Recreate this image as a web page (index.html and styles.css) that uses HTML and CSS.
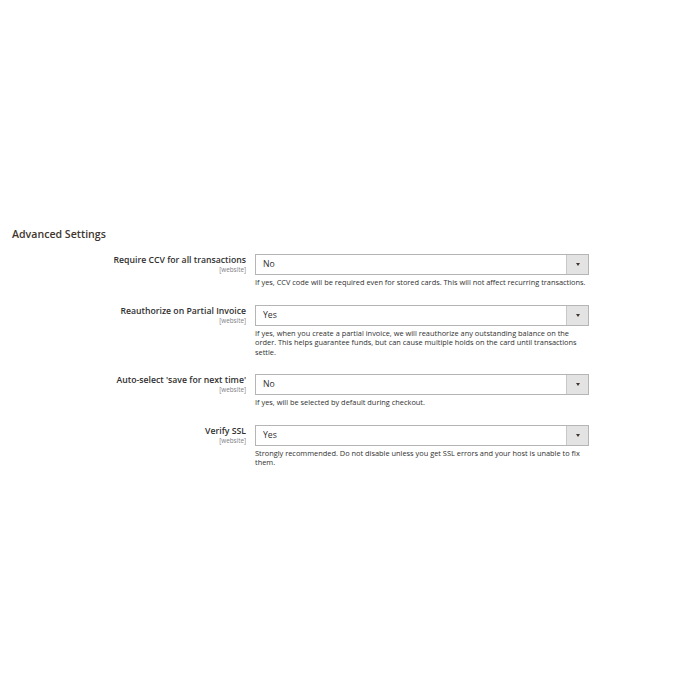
FILE: index.html
```html
<!DOCTYPE html>
<html>
<head>
<meta charset="utf-8">
<link rel="stylesheet" href="styles.css">
</head>
<body>
<div class="page">
  <h2 class="section-title">Advanced Settings</h2>
  <div class="fields">
    <div class="row">
      <div class="label"><span class="label-text">Require CCV for all transactions</span><span class="scope">[website]</span></div>
      <div class="control">
        <div class="select"><span class="value">No</span><span class="arrow"><span class="tri"></span></span></div>
        <p class="note">If yes, CCV code will be required even for stored cards. This will not affect recurring transactions.</p>
      </div>
    </div>
    <div class="row">
      <div class="label"><span class="label-text">Reauthorize on Partial Invoice</span><span class="scope">[website]</span></div>
      <div class="control">
        <div class="select"><span class="value">Yes</span><span class="arrow"><span class="tri"></span></span></div>
        <p class="note">If yes, when you create a partial invoice, we will reauthorize any outstanding balance on the order. This helps guarantee funds, but can cause multiple holds on the card until transactions settle.</p>
      </div>
    </div>
    <div class="row">
      <div class="label"><span class="label-text">Auto-select 'save for next time'</span><span class="scope">[website]</span></div>
      <div class="control">
        <div class="select"><span class="value">No</span><span class="arrow"><span class="tri"></span></span></div>
        <p class="note">If yes, will be selected by default during checkout.</p>
      </div>
    </div>
    <div class="row">
      <div class="label"><span class="label-text">Verify SSL</span><span class="scope">[website]</span></div>
      <div class="control">
        <div class="select"><span class="value">Yes</span><span class="arrow"><span class="tri"></span></span></div>
        <p class="note">Strongly recommended. Do not disable unless you get SSL errors and your host is unable to fix them.</p>
      </div>
    </div>
  </div>
</div>
</body>
</html>
```
FILE: styles.css
```css
html, body {
  margin: 0;
  padding: 0;
  background: #fff;
}
body {
  font-family: "Open Sans", "Liberation Sans", sans-serif;
  color: #303030;
}
.page {
  padding: 227px 0 0 12px;
}
.section-title {
  margin: 0;
  font-size: 10.6px;
  font-weight: 600;
  color: #41362f;
  line-height: 14px;
}
.fields {
  margin-top: 13px;
  display: flex;
  flex-direction: column;
  gap: 17px;
}
.row {
  display: flex;
  align-items: flex-start;
}
.label {
  width: 234px;
  display: flex;
  flex-direction: column;
  align-items: flex-end;
}
.label-text {
  font-size: 8.7px;
  font-weight: 600;
  color: #303030;
  line-height: 12px;
}
.scope {
  font-size: 6.3px;
  color: #808080;
  line-height: 8px;
}
.control {
  margin-left: 9px;
  width: 334px;
}
.select {
  height: 21px;
  box-sizing: border-box;
  border: 1px solid #b5b5b5;
  display: flex;
  align-items: stretch;
  background: #fff;
}
.value {
  flex: 1;
  font-size: 8.7px;
  line-height: 19px;
  padding-left: 7px;
  color: #303030;
}
.arrow {
  width: 21px;
  background: #e3e3e3;
  border-left: 1px solid #c8c8c8;
  display: flex;
  align-items: center;
  justify-content: center;
}
.tri {
  width: 0;
  height: 0;
  border-left: 2.5px solid transparent;
  border-right: 2.5px solid transparent;
  border-top: 3px solid #41362f;
}
.note {
  margin: 3px 0 0;
  font-size: 7.4px;
  line-height: 9.5px;
  color: #303030;
}
```
